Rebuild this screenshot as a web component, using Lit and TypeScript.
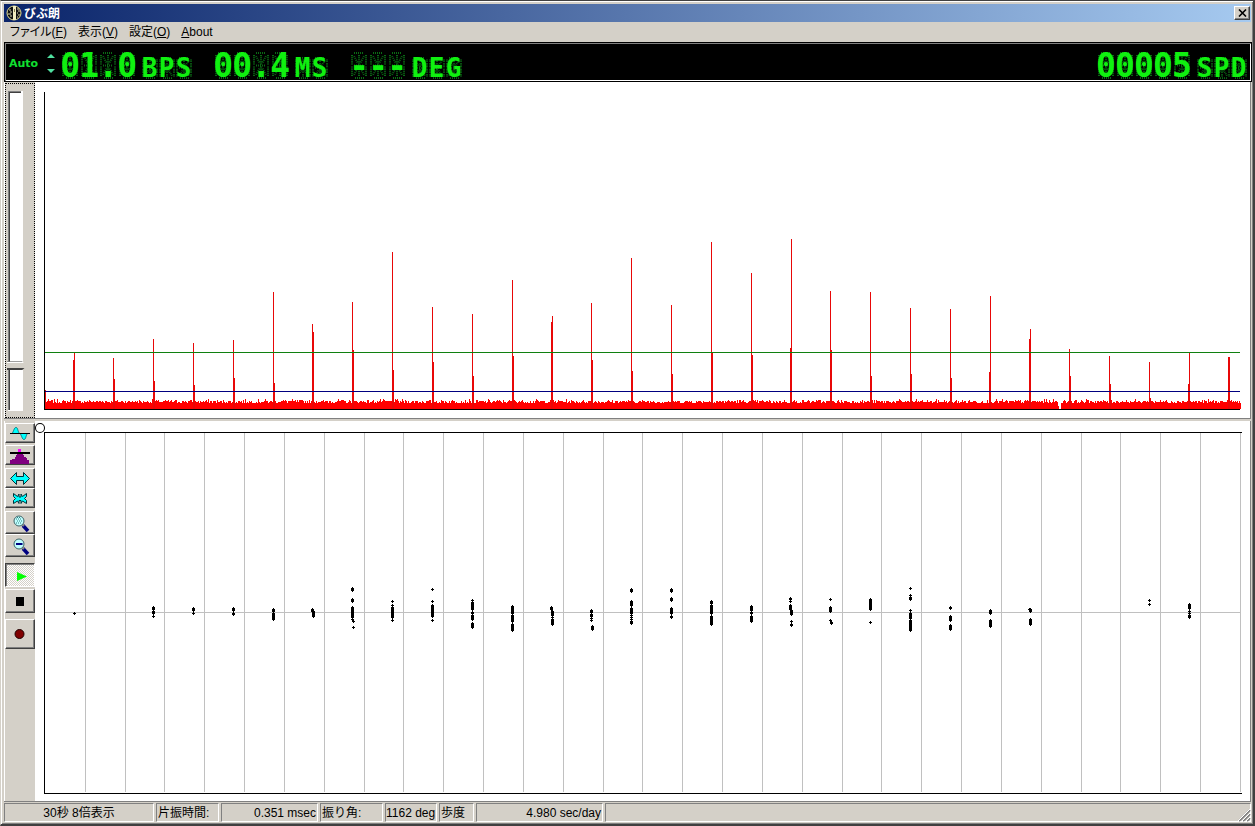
import { LitElement, html, svg, css } from "lit";
import { customElement, property } from "lit/decorators.js";

/* Beat peaks: [x, top, x of the shoulder column, top of the shoulder] in plot units. */
const PEAKS: number[][] = [
  [44, 382, 45, 390], [74, 353, 73, 360], [113, 358, 114, 379], [153, 339, 154, 381], [193, 343, 194, 385],
  [233, 340, 234, 378], [273, 292, 274, 383], [312, 324, 313, 332], [352, 302, 353, 350],
  [392, 252, 393, 370], [432, 307, 433, 362], [472, 314, 473, 376], [512, 280, 513, 356],
  [552, 316, 551, 322], [591, 303, 592, 360], [631, 258, 632, 371], [671, 305, 672, 374],
  [711, 242, 712, 352], [751, 273, 752, 355], [791, 239, 790, 348], [830, 291, 831, 350],
  [870, 292, 871, 376], [910, 308, 911, 374], [950, 309, 951, 378], [990, 296, 989, 372],
  [1030, 329, 1029, 339], [1069, 349, 1070, 376], [1109, 356, 1110, 384], [1149, 362, 1150, 398],
  [1189, 353, 1188, 384], [1229, 357, 1228, 357],
];

/* Beat error marks: x, then [from, to] runs or single positions. */
const MARKS: [number, (number | [number, number])[]][] = [
  [74, [613]],
  [153, [[607, 609], [611, 613], 616]],
  [193, [[608, 610], 613]],
  [233, [[608, 610], [613, 614]]],
  [273, [[609, 611], [613, 619]]],
  [312, [[609, 611]]], [313, [[611, 616]]],
  [352, [[588, 590], [599, 601], [607, 617], 619]], [353, [621, 627]],
  [392, [601, 605, [607, 617], 620]],
  [432, [589, 601, [605, 616], 620]],
  [472, [600, [602, 609], [612, 613], [615, 619], [623, 627]]],
  [512, [[606, 613], [615, 621], [624, 630]]],
  [551, [[607, 609]]], [552, [[611, 615], 617, [619, 624]]],
  [591, [[610, 612], [614, 616], 618, 620]], [592, [[626, 629]]],
  [631, [[589, 591], [601, 605], [608, 613], 615, 617, 619, [621, 623]]],
  [671, [[589, 591], [598, 600], [608, 613], [616, 617]]],
  [711, [[601, 603], [605, 613], [616, 624]]],
  [751, [[606, 610], [612, 613], [616, 621]]],
  [790, [[598, 599], 601, [605, 609]]], [791, [[610, 614], 621, [624, 625]]],
  [830, [599, [607, 611], 620]], [831, [[622, 623]]],
  [870, [[599, 609], 622]],
  [910, [588, 595, [597, 599], 610, [613, 618], [620, 630]]],
  [950, [[607, 608], [616, 620], [625, 629]]],
  [990, [[610, 613], [620, 626]]],
  [1029, [609]], [1030, [[609, 611], [619, 624]]],
  [1149, [600, 604]],
  [1189, [[604, 608], 611, 613, [615, 617]]],
];

function noiseFloor(): string {
  let seed = 7;
  let d = "";
  for (let x = 45; x <= 1240; x++) {
    seed = (seed * 1103515245 + 12345) % 2147483648;
    const r = seed / 2147483648;
    if (x === 1059 || x === 1060) continue;
    const top = x === 1058 ? 406 : r > 0.98 ? 399 : r > 0.85 ? 400 : r > 0.5 ? 401 : r > 0.2 ? 402 : 403;
    d += `M${x} ${top}h1V409h-1z`;
  }
  return d;
}

function markPath(): string {
  let d = "";
  for (const [x, runs] of MARKS) {
    for (const run of runs) {
      const [a, b] = typeof run === "number" ? [run, run] : run;
      d += `M${x - 1} ${a}h3V${b + 1}h-3zM${x} ${a - 1}h1V${b + 2}h-1z`;
    }
  }
  return d;
}

@customElement("segment-readout")
class SegmentReadout extends LitElement {
  @property() value = "";
  @property() unit = "";

  static styles = css`
    :host { display: flex; align-items: flex-end; gap: 5px; }
    .group { display: flex; font-family: "DejaVu Sans Mono", "Liberation Mono", monospace; font-weight: bold; color: #10f010; }
    .cell { display: grid; justify-items: center; align-items: center; }
    .cell > * { grid-area: 1 / 1; }
    .large .cell { width: 19px; height: 27px; font-size: 33px; line-height: 27px; }
    .small .cell { width: 17px; height: 22px; font-size: 26px; line-height: 22px; }
    .ghost { width: 16px; height: 100%; }
  `;

  private cell(ch: string) {
    return html`<span class="cell">
      <svg class="ghost" viewBox="0 0 16 26" preserveAspectRatio="none" aria-hidden="true">
        <path fill="none" stroke="#0a6a14" stroke-width="2" stroke-dasharray="1 1"
          d="M3 1H13M15 3V12M15 14V23M13 25H3M1 23V14M1 12V3M3 13H13M8 3V12M8 14V23M3 4L7 11M13 4L9 11M3 22L7 15M13 22L9 15"/>
      </svg><span>${ch}</span></span>`;
  }

  render() {
    return html`
      <span class="group large">${[...this.value].map((c) => this.cell(c))}</span>
      <span class="group small">${[...this.unit].map((c) => this.cell(c))}</span>`;
  }
}

const ICONS = {
  wave: svg`<path d="M7 10.500C9 8 9 4.500 11 4.500C13 4.500 12.500 8 14.500 10.500z" fill="#00ffff" stroke="#008080"/><path d="M15 10.500C17 13 17 16.500 19 16.500C21 16.500 20.500 13 22.500 10.500z" fill="#00ffff" stroke="#008080"/><path d="M5 10.500H25" stroke="#000"/>`,
  histogram: svg`<path d="M5 19V15H7V14H10V12H11V10H12V8H18V10H19V12H21V13H22V15H24V19z" fill="#800080"/><path d="M13 4h3v4h-3z" fill="#ff00ff"/><path d="M5 8H25" stroke="#000" stroke-width="2"/>`,
  expand: svg`<path d="M5.500 10.500L11.500 4.500V8.500H18.500V4.500L24.500 10.500L18.500 16.500V12.500H11.500V16.500z" fill="#00ffff" stroke="#003038"/>`,
  shrink: svg`<path d="M8.500 5.500L12.500 8.500L14 6V9H16V6L17.500 8.500L21.500 5.500V8.500L19.500 10.500L21.500 12.500V15.500L17.500 13L16 15.500V12.500H14V15.500L12.500 13L8.500 15.500V12.500L10.500 10.500L8.500 8.500z" fill="#00ffff" stroke="#003038"/>`,
  zoomIn: svg`<path d="M18 14.500L23 20" stroke="#000080" stroke-width="3.500"/><path d="M17 13L19 15" stroke="#808080" stroke-width="2"/><circle cx="14" cy="10" r="5" fill="#c0ffff" stroke="#406468"/><path d="M11 8h1M13 8h1M15 8h1M12 10h1M14 10h1M16 10h1M11 12h1M13 12h1M15 12h1M12 6.500h1M14 6.500h1" stroke="#308080"/>`,
  zoomOut: svg`<path d="M18 14.500L23 20" stroke="#000080" stroke-width="3.500"/><path d="M17 13L19 15" stroke="#808080" stroke-width="2"/><circle cx="14" cy="10" r="5" fill="#c0ffff" stroke="#406468"/><path d="M11 10H17.500" stroke="#000080" stroke-width="2"/>`,
  play: svg`<path d="M12 9L22 13.500L12 18z" fill="#00ff00"/>`,
  stop: svg`<path d="M11 8h8v9h-8z" fill="#000"/>`,
  record: svg`<circle cx="14.500" cy="15" r="4.500" fill="#800000" stroke="#200000"/>`,
};

@customElement("app-root")
class AppRoot extends LitElement {
  static styles = css`
    :host { display: block; }
    * { box-sizing: border-box; }
    .window {
      display: flex; flex-direction: column; height: 100vh; min-height: 700px;
      background: #d4d0c8; padding: 2px;
      border: 2px solid; border-color: #404040 #404040 #404040 #d4d0c8; border-left-width: 1px; border-top-width: 1px;
      box-shadow: inset 1px 1px #fff, inset -1px -1px #808080;
      font: 12px "Liberation Sans", "Noto Sans CJK JP", sans-serif; color: #000;
    }
    .title {
      display: flex; align-items: center; height: 18px; margin: 1px 0 0 1px; padding: 0 1px 0 2px; gap: 2px; flex: none;
      background: linear-gradient(to right, #0a246a, #a6caf0);
    }
    .title h1 { margin: 0; flex: 1; font: bold 12px/18px "Noto Sans CJK JP", sans-serif; color: #fff; }
    .raised { background: #d4d0c8; border: 1px solid; border-color: #fff #404040 #404040 #fff; box-shadow: inset -1px -1px #808080; padding: 0; }
    .close { width: 16px; height: 14px; display: grid; place-items: center; }
    .menu { display: flex; gap: 11px; height: 20px; padding-left: 7px; flex: none; align-items: center; }
    .menu button { border: 0; background: none; padding: 0; font: 12px/18px "Liberation Sans", "Noto Sans CJK JP", sans-serif; font-feature-settings: "palt"; color: #000; }
    .led {
      display: flex; align-items: flex-end; gap: 21px; height: 40px; flex: none; margin: 0 -1px 0 1px; padding: 0 4px 2px 4px;
      background: #000; border: 1px solid #000; box-shadow: inset 1px 1px #808080, inset -1px -1px #fff;
    }
    .auto { align-self: center; display: flex; align-items: center; gap: 8px; margin: 4px -17px 0 0; color: #10e030; font: bold 11px "DejaVu Sans", sans-serif; }
    .spin { display: flex; flex-direction: column; gap: 9px; }
    .spin button { width: 10px; height: 6px; padding: 0; border: 0; background: none; display: grid; }
    .spread { flex: 1; }
    .pane { display: flex; min-height: 0; background: #fff; margin-left: 1px; border-right: 1px solid #808080; border-bottom: 1px solid #808080; }
    .spectrum { flex: 337 1 0; }
    .trace { flex: 382 1 0; margin-top: 2px; }
    .side { width: 31px; flex: none; background: #d4d0c8; border-left: 1px solid #fff; }
    .level { padding-top: 1px; }
    .level label { display: flex; height: 100%; border: 1px dotted #000; padding: 7px 0 6px 1px; }
    .level input {
      appearance: none; writing-mode: vertical-lr; width: 20px; height: 100%; margin: 0;
      background:
        linear-gradient(#fff, #fff) 3px 2px / 11px calc(100% - 3px) no-repeat,
        linear-gradient(#404040, #404040) 2px 1px / 12px calc(100% - 2px) no-repeat,
        linear-gradient(#808080, #808080) 1px 0 / 13px calc(100% - 1px) no-repeat,
        linear-gradient(#fff, #fff) 1px 0 / 15px 100% no-repeat;
    }
    .level input::-webkit-slider-runnable-track { width: 20px; height: 100%; }
    .level input::-webkit-slider-thumb {
      appearance: none; width: 20px; height: 9px;
      background: linear-gradient(#808080 1px, #fff 1px, #fff 2px, #d4d0c8 2px, #d4d0c8 7px, #404040 7px);
      clip-path: polygon(0 0, 75% 0, 100% 50%, 75% 100%, 0 100%);
    }
    .plot { flex: 1; min-width: 0; height: 100%; display: block; }
    .tools { display: flex; flex-direction: column; padding-top: 2px; }
    .tools button { width: 30px; height: 20px; flex: none; display: grid; overflow: hidden; }
    .tools .mid { height: 23px; }
    .tools .tall { height: 24px; }
    .tools .big { height: 30px; }
    .tools .near { margin-top: 2px; }
    .tools .apart { margin-top: 3px; }
    .tools .group { margin-top: 6px; }
    .tools .pressed {
      border-color: #404040 #fff #fff #404040; box-shadow: inset 1px 1px #808080;
      background: repeating-conic-gradient(#fff 0 25%, #d4d0c8 0 50%) 0 0 / 2px 2px;
    }
    .status { display: flex; gap: 2px; height: 19px; margin: 1px 0 0 1px; flex: none; position: relative; }
    .status > span { border: 1px solid; border-color: #808080 #fff #fff #808080; line-height: 18px; padding: 0 1px; white-space: nowrap; }
    .status .mode { width: 150px; text-align: center; }
    .status .caption { width: 63px; }
    .status .beat { width: 97px; text-align: right; }
    .status .amp { width: 52px; padding: 0; }
    .status .rate { width: 35px; }
    .status .daily { width: 127px; text-align: right; }
    .status .rest { flex: 1; }
    .grip { position: absolute; right: 0; bottom: 0; }
  `;

  private tool(label: string, cls: string, height: number, icon: unknown) {
    return html`<button class="raised ${cls}" aria-label=${label}>
      <svg width="28" height=${height - 2} viewBox="1 1 28 ${height - 2}" aria-hidden="true">${icon}</svg>
    </button>`;
  }

  render() {
    const grid = Array.from({ length: 30 }, (_, i) => 85 + Math.floor(i * 39.83 + 0.25));
    return html`
      <div class="window">
        <header class="title">
          <svg width="16" height="16" viewBox="0 0 16 16" aria-hidden="true">
            <circle cx="8" cy="8" r="7" fill="#101010" stroke="#e8e090"/>
            <path d="M7 1h3v14h-3z" fill="#f0ecc0"/>
            <path d="M3 5h2M4 7h2M2 9h3M4 11h2M11 4h2M12 6h2M11 8h1M12 10h2M11 12h1" stroke="#d8d8b0"/>
            <path d="M8 4h1v3h-1z" fill="#807850"/>
          </svg>
          <h1>びぶ朗</h1>
          <button class="raised close" aria-label="Close">
            <svg width="9" height="8" viewBox="0 0 9 8" aria-hidden="true"><path d="M1 .5L8 7.500M8 .5L1 7.500" stroke="#000" stroke-width="1.600"/></svg>
          </button>
        </header>
        <nav class="menu">
          <button>ファイル(<u>F</u>)</button>
          <button>表示(<u>V</u>)</button>
          <button>設定(<u>O</u>)</button>
          <button><u>A</u>bout</button>
        </nav>
        <section class="led">
          <div class="auto">
            <span>Auto</span>
            <div class="spin">
              <button aria-label="Up"><svg width="10" height="6" aria-hidden="true"><path d="M1 5L5 1L9 5z" fill="#50e0a0"/></svg></button>
              <button aria-label="Down"><svg width="10" height="6" aria-hidden="true"><path d="M1 1L5 5L9 1z" fill="#50e0a0"/></svg></button>
            </div>
          </div>
          <segment-readout value="01.0" unit="BPS"></segment-readout>
          <segment-readout value="00.4" unit="MS"></segment-readout>
          <segment-readout value="---" unit="DEG"></segment-readout>
          <span class="spread"></span>
          <segment-readout value="00005" unit="SPD"></segment-readout>
        </section>
        <section class="pane spectrum">
          <div class="side level"><label><input type="range" min="0" max="100" value="87" aria-label="Level"></label></div>
          <svg class="plot" viewBox="35 82 1215 336" preserveAspectRatio="none" shape-rendering="crispEdges" aria-hidden="true">
            <path d=${noiseFloor()} fill="#ff0000"/>
            <path fill="#e80808" d=${PEAKS.map(([x, t, sx, st]) => `M${x} ${t}h1V409h-1zM${sx} ${st}h1V409h-1z`).join("")}/>
            <path d="M44 92h1v318h-1zM44 409h1196v1h-1196z" fill="#000"/>
            <path d="M45 352h1195v1h-1195z" fill="#108010"/>
            <path d="M45 391h1195v1h-1195z" fill="#000080"/>
          </svg>
        </section>
        <section class="pane trace">
          <div class="side tools">
            ${this.tool("Waveform", "", 20, ICONS.wave)}
            ${this.tool("Histogram", "near", 20, ICONS.histogram)}
            ${this.tool("Expand", "apart", 20, ICONS.expand)}
            ${this.tool("Shrink", "", 20, ICONS.shrink)}
            ${this.tool("Zoom in", "mid apart", 23, ICONS.zoomIn)}
            ${this.tool("Zoom out", "mid", 23, ICONS.zoomOut)}
            ${this.tool("Play", "tall group pressed", 24, ICONS.play)}
            ${this.tool("Stop", "tall near", 24, ICONS.stop)}
            ${this.tool("Record", "big group", 30, ICONS.record)}
          </div>
          <svg class="plot" viewBox="35 421 1215 380" preserveAspectRatio="none" shape-rendering="crispEdges" aria-hidden="true">
            <path fill="#c0c0c0" d=${grid.map((x) => `M${x} 433h1V792h-1z`).join("") + "M45 612h1196v1h-1196z"}/>
            <path d="M44 432h1198v1h-1197v360h1197v1h-1198z" fill="#000"/>
            <path d=${markPath()} fill="#000"/>
            <circle cx="40" cy="428" r="4.500" fill="#fff" stroke="#000" shape-rendering="auto"/>
          </svg>
        </section>
        <footer class="status">
          <span class="mode">30秒 8倍表示</span>
          <span class="caption">片振時間:</span>
          <span class="beat">0.351 msec</span>
          <span class="caption">振り角:</span>
          <span class="amp">1162 deg</span>
          <span class="rate">歩度</span>
          <span class="daily">4.980 sec/day</span>
          <span class="rest"></span>
          <svg class="grip" width="13" height="13" aria-hidden="true">
            <path d="M1 12L12 1M5 12L12 5M9 12L12 9" stroke="#808080" stroke-width="2"/>
            <path d="M0 12L12 0M4 12L12 4M8 12L12 8" stroke="#fff"/>
          </svg>
        </footer>
      </div>`;
  }
}
